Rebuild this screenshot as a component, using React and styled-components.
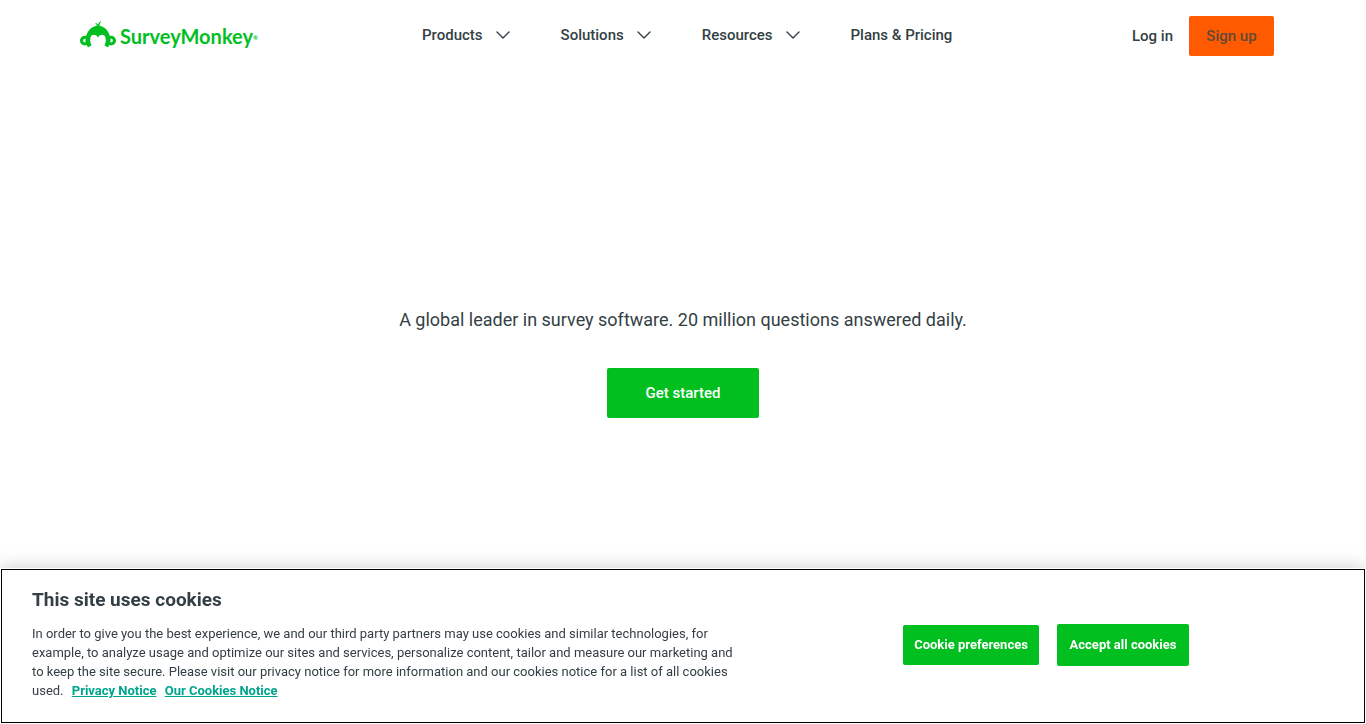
import React from "react";
import styled, { createGlobalStyle } from "styled-components";

const GlobalStyle = createGlobalStyle`
  *, *::before, *::after { box-sizing: border-box; }
  body {
    margin: 0;
    background: #fff;
    color: #333f44;
    font-family: Roboto, "Liberation Sans", sans-serif;
  }
`;

const Page = styled.div`
  min-height: 100vh;
  display: flex;
  flex-direction: column;
`;

const Header = styled.header`
  display: flex;
  align-items: center;
  height: 72px;
  padding: 0 92px 0 80px;
`;

const LogoLink = styled.a`
  display: flex;
  align-items: center;
  gap: 4px;
  width: 180px;
  color: #00bf1f;
  text-decoration: none;
`;

const Mark = styled.svg`
  flex: none;
  margin-bottom: 4px;
`;

const Wordmark = styled.span`
  font: 700 20px/32px Lato, sans-serif;
  white-space: nowrap;
`;

const Registered = styled.sup`
  font-size: 6px;
  line-height: 6px;
  vertical-align: 4px;
`;

const Nav = styled.nav`
  display: flex;
  align-items: center;
  gap: 51px;
  margin-left: 162px;
`;

const NavButton = styled.button`
  display: flex;
  align-items: center;
  gap: 13px;
  padding: 0 0 2px;
  border: 0;
  background: none;
  color: #333f44;
  font: 500 15px/24px Roboto, sans-serif;
  white-space: nowrap;
  cursor: pointer;
`;

const NavLink = styled.a`
  padding-bottom: 2px;
  color: #333f44;
  font-size: 15px;
  font-weight: 500;
  line-height: 24px;
  text-decoration: none;
  white-space: nowrap;
`;

const Actions = styled.div`
  display: flex;
  align-items: center;
  gap: 16px;
  margin-left: auto;
`;

const LogIn = styled.a`
  color: #333f44;
  font-size: 15px;
  font-weight: 500;
  line-height: 24px;
  text-decoration: none;
  white-space: nowrap;
`;

const SignUp = styled.a`
  min-width: 85px;
  padding: 8px 16px;
  border-radius: 2px;
  background: #ff5a00;
  color: #5e4a36;
  font-size: 15px;
  font-weight: 500;
  line-height: 24px;
  text-align: center;
  text-decoration: none;
  white-space: nowrap;
`;

const Hero = styled.main`
  flex: 1;
  display: flex;
  flex-direction: column;
  align-items: center;
  gap: 34px;
  padding: 234px 32px 180px;
`;

const Tagline = styled.p`
  margin: 0;
  font-size: 18px;
  line-height: 28px;
  text-align: center;
`;

const GetStarted = styled.a`
  min-width: 152px;
  padding: 13px 32px;
  border-radius: 2px;
  background: #00bf1f;
  color: #fff;
  font-size: 15px;
  font-weight: 500;
  line-height: 24px;
  text-align: center;
  text-decoration: none;
`;

const CookieBanner = styled.section`
  position: fixed;
  right: 0;
  bottom: 0;
  left: 0;
  display: flex;
  align-items: center;
  padding: 16px 32px 24px;
  background: #fff;
  box-shadow: 0 0 18px rgba(0, 0, 0, 0.2);
  outline: 1px solid #000;
  outline-offset: -2px;
`;

const CookieCopy = styled.div`
  flex: 0 1 710px;
`;

const CookieTitle = styled.h2`
  margin: 0 0 8px;
  font-size: 19px;
  font-weight: 700;
  line-height: 32px;
`;

const CookieText = styled.p`
  margin: 0;
  font-size: 13px;
  line-height: 19px;
`;

const PolicyLink = styled.a`
  margin-left: 5px;
  color: #00a58e;
  font-weight: 700;
`;

const CookieActions = styled.div`
  display: flex;
  align-items: center;
  gap: 18px;
  margin-left: 161px;
  padding-top: 6px;
`;

const CookieButton = styled.button`
  min-width: ${(p) => (p.$primary ? 132 : 136)}px;
  height: ${(p) => (p.$primary ? 42 : 40)}px;
  padding: 0 8px;
  border: 0;
  border-radius: 2px;
  background: #00bf1f;
  color: #fff;
  font: 700 13px/20px Roboto, sans-serif;
  white-space: nowrap;
  cursor: pointer;
`;

const menus = ["Products", "Solutions", "Resources"];

function Chevron() {
  return (
    <svg width="14" height="8" viewBox="0 0 14 8" fill="none" aria-hidden="true">
      <path d="M1 1l6 6 6-6" stroke="#333f44" strokeWidth="1.4" strokeLinecap="round" strokeLinejoin="round" />
    </svg>
  );
}

function MonkeyMark() {
  return (
    <Mark width="36" height="27" viewBox="0 0 35 26" fill="#00bf1f" aria-hidden="true">
      <path
        fillRule="evenodd"
        d="M30.3 14.2c-.5 0-.9.1-1.3.2C27.6 9.100 23.600 5.200 18.900 4.500c.1-1.400.7-2.800 1.700-4.100l-.5-.3c-1.300.9-2.200 2.100-2.600 3.400-.4-.9-1.300-1.500-2.500-1.600l-.1.500c.8.4 1.300 1.100 1.400 2.100C11.500 5.200 7.500 9.100 6 14.400c-.4-.1-.8-.2-1.300-.2C2.100 14.200 0 16.300 0 18.900s2.100 4.700 4.700 4.700c.7 0 1.300-.1 1.900-.4.3.8.7 1.600 1.200 2.300l3.400-1.900C10.400 21.900 9.900 20 9.900 18c0-2.900 1.400-4.800 3.600-4.800 2 0 3.300 1.200 4 2.800.7-1.600 2-2.800 4-2.800 2.200 0 3.600 1.900 3.600 4.800 0 2-.5 3.900-1.300 5.600l3.400 1.900c.5-.7.9-1.500 1.200-2.300.6.300 1.200.400 1.900.400 2.600 0 4.700-2.100 4.700-4.700s-2.100-4.700-4.700-4.700zM5.400 20.600c-.2.100-.4.100-.6.100-1 0-1.800-.8-1.800-1.800s.8-1.800 1.800-1.800c.2 0 .4 0 .6.100-.1 1.100-.1 2.300 0 3.400zm24.800.1c-.2 0-.4 0-.6-.1.1-1.100.1-2.300 0-3.400.2-.1.400-.1.600-.1 1 0 1.800.8 1.800 1.800s-.8 1.800-1.800 1.800z"
      />
    </Mark>
  );
}

export default function App() {
  return (
    <Page>
      <GlobalStyle />
      <Header>
        <LogoLink href="#" aria-label="SurveyMonkey">
          <MonkeyMark />
          <Wordmark>
            SurveyMonkey<Registered>®</Registered>
          </Wordmark>
        </LogoLink>
        <Nav>
          {menus.map((label) => (
            <NavButton key={label} type="button" aria-haspopup="true">
              {label}
              <Chevron />
            </NavButton>
          ))}
          <NavLink href="#pricing">Plans &amp; Pricing</NavLink>
        </Nav>
        <Actions>
          <LogIn href="#login">Log in</LogIn>
          <SignUp href="#signup">Sign up</SignUp>
        </Actions>
      </Header>
      <Hero>
        <Tagline>A global leader in survey software. 20 million questions answered daily.</Tagline>
        <GetStarted href="#start">Get started</GetStarted>
      </Hero>
      <CookieBanner aria-labelledby="cookie-title">
        <CookieCopy>
          <CookieTitle id="cookie-title">This site uses cookies</CookieTitle>
          <CookieText>
            In order to give you the best experience, we and our third party partners may use cookies and similar
            technologies, for example, to analyze usage and optimize our sites and services, personalize content,
            tailor and measure our marketing and to keep the site secure. Please visit our privacy notice for more
            information and our cookies notice for a list of all cookies used.{" "}
            <PolicyLink href="#privacy">Privacy Notice</PolicyLink>{" "}
            <PolicyLink href="#cookies">Our Cookies Notice</PolicyLink>
          </CookieText>
        </CookieCopy>
        <CookieActions>
          <CookieButton type="button">Cookie preferences</CookieButton>
          <CookieButton type="button" $primary>
            Accept all cookies
          </CookieButton>
        </CookieActions>
      </CookieBanner>
    </Page>
  );
}
